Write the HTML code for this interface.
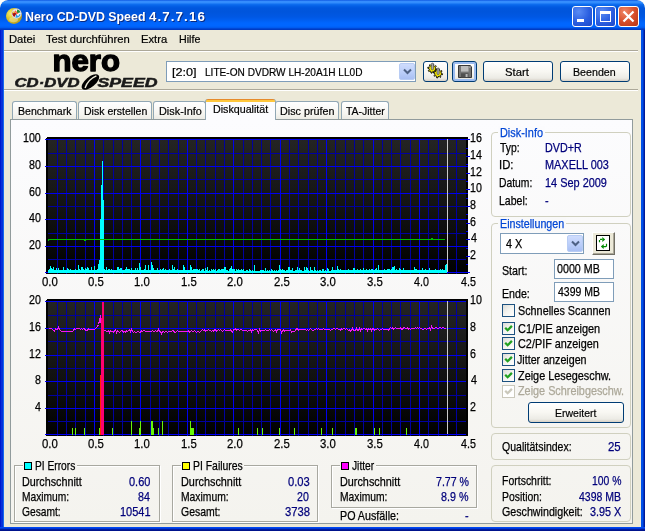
<!DOCTYPE html>
<html lang="de"><head><meta charset="utf-8"><title>Nero CD-DVD Speed 4.7.7.16</title>
<style>
html,body{margin:0;padding:0}
body{width:645px;height:531px;overflow:hidden;position:relative;background:#fff;font-family:"Liberation Sans",sans-serif;font-size:11px;color:#000;line-height:14px}
#win *{position:absolute;box-sizing:border-box;white-space:pre}
#win{position:absolute;left:0;top:0;width:645px;height:531px;background:#ece9d8;border-radius:8px 8px 0 0;overflow:hidden;will-change:transform}
#title{left:0;top:0;width:645px;height:30px;border-radius:8px 8px 0 0;
 background:linear-gradient(to bottom,#0a50dc 0px,#2f86fb 1px,#3c94ff 2px,#2a86fa 3px,#0d6cee 4.5px,#0460e6 6px,#0057de 8px,#0055dc 12px,#0058e4 17px,#005ef0 20px,#0066fe 23px,#0066ff 26px,#005cf0 27.5px,#0048d6 28.5px,#0034b8 30px)}
#ttext{left:25px;top:10px;line-height:13px;color:#fff;font-weight:bold;font-size:13.7px;text-shadow:1px 1px 0 #0a2a80}
.tb{top:6px;width:21px;height:21px;border:1px solid #fff;border-radius:3px;background:radial-gradient(circle at 30% 25%,#5a8cf4 0%,#2a5ee0 55%,#1c48c8 100%)}
.tbx{background:radial-gradient(circle at 30% 25%,#f08868 0%,#d8502c 50%,#b83414 100%)}
#bl{left:0;top:30px;width:4px;height:501px;background:linear-gradient(to right,#0019cf 0,#0019cf 1px,#0831d9 1px,#0831d9 3px,#166aee 3px)}
#br{left:641px;top:30px;width:4px;height:501px;background:linear-gradient(to right,#0050e8 0,#0050e8 2px,#0034c4 2px,#0034c4 3px,#001a98 3px)}
#bb{left:0;top:527px;width:645px;height:4px;background:linear-gradient(to bottom,#0048f1 0,#0048f1 1px,#0038d8 1px,#0038d8 2px,#001ca0 2px,#001ca0 3px,#00138c 3px)}
.t{font-size:11px;line-height:14px;transform-origin:0 0;-webkit-text-stroke:0.2px}
.m{font-size:12.4px;line-height:14px;transform-origin:0 0;-webkit-text-stroke:0.25px}
.c{transform-origin:50% 0}
.sep{left:4px;width:634px;height:2px;border-top:1px solid #aca899;border-bottom:1px solid #fff}
.btn{border:1px solid #003c74;border-radius:3px;background:linear-gradient(to bottom,#fff 0%,#f8f7f2 50%,#ecebe5 85%,#d6d0c5 100%)}
.tab{top:101px;height:18px;border:1px solid #91a7b4;border-bottom:none;border-radius:3px 3px 0 0;background:linear-gradient(to bottom,#fff,#f6f5f0 70%,#ecebe4)}
#panel{left:10px;top:119px;width:623px;height:405px;border:1px solid #919b9c;background:linear-gradient(to bottom,#fcfcfe,#f4f3ee)}
.gb{border:1px solid #d0d0bf;border-radius:4px}
.ge{border:1px solid #a8a8a0;box-shadow:1px 1px 0 #fff, inset 1px 1px 0 #fff}
.cover{height:12px}
.inp{border:1px solid #7f9db9;background:#fff}
.dd{width:16px;height:17px;border-radius:2px;border:1px solid #b8ccf4;background:linear-gradient(to bottom,#cfdcfd,#b9cdf9 60%,#a9bff3)}
.cb{width:13px;height:13px;border:1px solid #1c5180;background:linear-gradient(135deg,#dcdcd7,#f4f4f0 50%,#fff)}
.sq{width:8px;height:8px;border:1px solid #000}
</style></head>
<body>
<div id="win">
<div id="title"></div>
<svg style="left:5px;top:7px" width="18" height="18" viewBox="5 7 18 18">
<defs><radialGradient id="dg" cx="0.3" cy="0.35" r="0.8"><stop offset="0" stop-color="#f4ee70"/><stop offset="0.45" stop-color="#dcc428"/><stop offset="1" stop-color="#b09418"/></radialGradient></defs>
<ellipse cx="14" cy="16" rx="8" ry="7.9" fill="url(#dg)"/>
<ellipse cx="13.6" cy="19.6" rx="4.4" ry="2.6" fill="#f0e4a0" opacity="0.55"/>
<circle cx="16.5" cy="13.6" r="5.1" fill="#d4d4dc"/><circle cx="16.5" cy="13.6" r="4.1" fill="#f4f4f8"/>
<path d="M16.5 13.6 L13 11.4 A4.1 4.1 0 0 0 14.4 17.1Z" fill="#a81010"/>
<path d="M16.5 13.6 L17.2 9.6 A4.1 4.1 0 0 1 20.4 12.2Z" fill="#209038"/>
<path d="M16.5 13.6 L20.5 14.4 A4.1 4.1 0 0 1 15.4 17.5Z" fill="#28a0e8"/>
<path d="M14.8 10.8 L18.4 15" stroke="#ff6040" stroke-width="1.6" fill="none"/>
<circle cx="13.6" cy="12.4" r="0.8" fill="#ffe020"/><circle cx="18" cy="14.8" r="1" fill="#fff"/></svg>
<div id="ttext"><span style="position:static;display:inline-block;transform:scaleX(.905);transform-origin:0 0">Nero CD-DVD Speed&nbsp;</span><span style="left:123.5px;top:0;letter-spacing:1.15px;transform:scaleX(.97);transform-origin:0 0">4.7.7.16</span></div>
<div class="tb" style="left:572px"><div style="left:4px;top:12px;width:7px;height:3px;background:#fff"></div></div>
<div class="tb" style="left:595px"><div style="left:4px;top:4px;width:11px;height:11px;border:1px solid #fff;border-top-width:3px"></div></div>
<div class="tb tbx" style="left:618px"><svg style="left:0;top:0" width="19" height="19" viewBox="0 0 19 19"><path d="M4.5 4.5 L14.5 14.5 M14.5 4.5 L4.5 14.5" stroke="#fff" stroke-width="2.2" fill="none"/></svg></div>
<div id="bl"></div><div id="br"></div><div id="bb"></div>
<span class="t" style="left:8.5px;top:32px;transform:scaleX(1.021);">Datei</span>
<span class="t" style="left:46.2px;top:32px;transform:scaleX(1.022);">Test durchführen</span>
<span class="t" style="left:140.5px;top:32px;transform:scaleX(1.020);">Extra</span>
<span class="t" style="left:178.8px;top:32px;transform:scaleX(0.971);">Hilfe</span>
<div class="sep" style="top:50px"></div>
<div class="sep" style="top:89px"></div>
<svg id="logo" style="left:10px;top:50px" width="152" height="42" viewBox="10 50 152 42">
<text x="86.2" y="71" text-anchor="middle" font-family="Liberation Sans, sans-serif" font-weight="bold" font-size="29" textLength="67.5" lengthAdjust="spacingAndGlyphs" fill="#000" stroke="#000" stroke-width="1.3" stroke-linejoin="round">nero</text>
<g font-family="Liberation Sans, sans-serif" font-weight="bold" font-style="italic" font-size="12.6" fill="#1a1a1a" stroke="#1a1a1a" stroke-width="0.5">
<text x="14.5" y="86.6" textLength="65" lengthAdjust="spacingAndGlyphs">CD·DVD</text>
<text x="97.5" y="86.6" textLength="60" lengthAdjust="spacingAndGlyphs">SPEED</text>
</g>
<g transform="translate(90.4 82) rotate(-40)"><ellipse cx="0" cy="0" rx="10.6" ry="5" fill="#000"/><path d="M-8 1.2 Q0 -3.6 8.5 -0.8" stroke="#ece9d8" stroke-width="1.4" fill="none"/></g>
</svg>
<div class="inp" style="left:166px;top:61px;width:250px;height:21px"></div>
<span class="t" style="left:171.8px;top:65px;transform:scaleX(1.150);">[2:0]</span>
<span class="t" style="left:205.1px;top:65px;transform:scaleX(0.918);">LITE-ON DVDRW LH-20A1H LL0D</span>
<div class="dd" style="left:399px;top:63px"><svg style="left:0;top:0" width="15" height="15" viewBox="0 0 15 15"><path d="M4 5.5 L7.5 9 L11 5.5" stroke="#4d6185" stroke-width="2" fill="none"/></svg></div>
<div class="btn" style="left:423px;top:61px;width:25px;height:21px"></div>
<svg style="left:426px;top:62px" width="19" height="18" viewBox="0 0 19 18">
<path d="M9.6 6.6 L10.9 7.0 L10.7 8.0 L9.3 7.9 L8.6 8.9 L9.2 10.1 L8.5 10.7 L7.6 9.6 L6.3 9.9 L5.9 11.2 L4.9 11.0 L5.0 9.6 L4.0 8.9 L2.8 9.5 L2.2 8.8 L3.3 7.9 L3.0 6.6 L1.7 6.2 L1.9 5.2 L3.3 5.3 L4.0 4.3 L3.4 3.1 L4.1 2.5 L5.0 3.6 L6.3 3.3 L6.7 2.0 L7.7 2.2 L7.6 3.6 L8.6 4.3 L9.8 3.7 L10.4 4.4 L9.3 5.3Z" fill="#f4e800" stroke="#000" stroke-width="0.9" stroke-linejoin="round"/>
<path d="M15.3 11.4 L16.6 11.8 L16.4 12.8 L15.0 12.7 L14.3 13.7 L14.9 14.9 L14.2 15.5 L13.3 14.4 L12.0 14.7 L11.6 16.0 L10.6 15.8 L10.7 14.4 L9.7 13.7 L8.5 14.3 L7.9 13.6 L9.0 12.7 L8.7 11.4 L7.4 11.0 L7.6 10.0 L9.0 10.1 L9.7 9.1 L9.1 7.9 L9.8 7.3 L10.7 8.4 L12.0 8.1 L12.4 6.8 L13.4 7.0 L13.3 8.4 L14.3 9.1 L15.5 8.5 L16.1 9.2 L15.0 10.1Z" fill="#f4e800" stroke="#000" stroke-width="0.9" stroke-linejoin="round"/>
<rect x="5.3" y="1.2" width="2.2" height="6.6" rx="1" fill="#a8a8a8" stroke="#505050" stroke-width="0.7"/>
<rect x="11" y="6" width="2.2" height="6.6" rx="1" fill="#a8a8a8" stroke="#505050" stroke-width="0.7"/></svg>
<div class="btn" style="left:452px;top:61px;width:25px;height:21px;box-shadow:inset 0 0 0 2px #9cbcf0"></div>
<svg style="left:458px;top:65px" width="14" height="13" viewBox="0 0 14 13">
<path d="M0.5 0.5 H12.2 L13.5 1.8 V12.5 H0.5 Z" fill="#747474" stroke="#383838" stroke-width="1"/><rect x="3" y="1" width="7.5" height="5.6" fill="#bcbcbc"/><rect x="3" y="8.3" width="7.5" height="4.2" fill="#505050"/><rect x="7.6" y="9" width="2" height="3" fill="#b8b8b8"/><rect x="11.4" y="1.6" width="1" height="1" fill="#e0e0e0"/></svg>
<div class="btn" style="left:483px;top:61px;width:70px;height:21px"></div>
<span class="t" style="left:504.8px;top:65px;transform:scaleX(1.026);">Start</span>
<div class="btn" style="left:560px;top:61px;width:70px;height:21px"></div>
<span class="t" style="left:572.5px;top:65px;transform:scaleX(0.970);">Beenden</span>
<div id="panel"></div>
<div class="tab" style="left:12px;width:65px"></div>
<div class="tab" style="left:78px;width:74px"></div>
<div class="tab" style="left:153px;width:53px"></div>
<div class="tab" style="left:275px;width:64px"></div>
<div class="tab" style="left:341px;width:48px"></div>
<div class="tab" style="left:205px;top:99px;width:71px;height:21px;background:linear-gradient(to bottom,#e68b2c 0,#e68b2c 1px,#ffc73c 1px,#ffc73c 3px,#fcfcfe 3px);border-top:none"></div>
<span class="t" style="left:17.6px;top:104px;transform:scaleX(0.962);">Benchmark</span>
<span class="t" style="left:83.9px;top:104px;transform:scaleX(0.958);">Disk erstellen</span>
<span class="t" style="left:158.9px;top:104px;transform:scaleX(0.988);">Disk-Info</span>
<span class="t" style="left:213.0px;top:102px;transform:scaleX(0.971);">Diskqualität</span>
<span class="t" style="left:280.1px;top:104px;transform:scaleX(0.978);">Disc prüfen</span>
<span class="t" style="left:345.9px;top:104px;transform:scaleX(0.950);">TA-Jitter</span>
<svg id="charts" width="645" height="531" viewBox="0 0 645 531" style="left:0;top:0" shape-rendering="crispEdges">
<defs><linearGradient id="gbg" x1="0" y1="0" x2="0" y2="1"><stop offset="0" stop-color="#242424"/><stop offset="0.6" stop-color="#101010"/><stop offset="1" stop-color="#000"/></linearGradient></defs>
<path d="M47 137 H468 V274 H46 V138 Z" fill="#000"/>
<rect x="48" y="139" width="418" height="134" fill="url(#gbg)"/>
<rect x="57" y="139" width="1" height="135" fill="#0000a0"/>
<rect x="66" y="139" width="1" height="135" fill="#0000a0"/>
<rect x="75" y="139" width="1" height="135" fill="#0000a0"/>
<rect x="85" y="139" width="1" height="135" fill="#0000a0"/>
<rect x="103" y="139" width="1" height="135" fill="#0000a0"/>
<rect x="113" y="139" width="1" height="135" fill="#0000a0"/>
<rect x="122" y="139" width="1" height="135" fill="#0000a0"/>
<rect x="131" y="139" width="1" height="135" fill="#0000a0"/>
<rect x="150" y="139" width="1" height="135" fill="#0000a0"/>
<rect x="159" y="139" width="1" height="135" fill="#0000a0"/>
<rect x="168" y="139" width="1" height="135" fill="#0000a0"/>
<rect x="178" y="139" width="1" height="135" fill="#0000a0"/>
<rect x="196" y="139" width="1" height="135" fill="#0000a0"/>
<rect x="205" y="139" width="1" height="135" fill="#0000a0"/>
<rect x="215" y="139" width="1" height="135" fill="#0000a0"/>
<rect x="224" y="139" width="1" height="135" fill="#0000a0"/>
<rect x="243" y="139" width="1" height="135" fill="#0000a0"/>
<rect x="252" y="139" width="1" height="135" fill="#0000a0"/>
<rect x="261" y="139" width="1" height="135" fill="#0000a0"/>
<rect x="270" y="139" width="1" height="135" fill="#0000a0"/>
<rect x="289" y="139" width="1" height="135" fill="#0000a0"/>
<rect x="298" y="139" width="1" height="135" fill="#0000a0"/>
<rect x="308" y="139" width="1" height="135" fill="#0000a0"/>
<rect x="317" y="139" width="1" height="135" fill="#0000a0"/>
<rect x="335" y="139" width="1" height="135" fill="#0000a0"/>
<rect x="345" y="139" width="1" height="135" fill="#0000a0"/>
<rect x="354" y="139" width="1" height="135" fill="#0000a0"/>
<rect x="363" y="139" width="1" height="135" fill="#0000a0"/>
<rect x="382" y="139" width="1" height="135" fill="#0000a0"/>
<rect x="391" y="139" width="1" height="135" fill="#0000a0"/>
<rect x="400" y="139" width="1" height="135" fill="#0000a0"/>
<rect x="410" y="139" width="1" height="135" fill="#0000a0"/>
<rect x="428" y="139" width="1" height="135" fill="#0000a0"/>
<rect x="438" y="139" width="1" height="135" fill="#0000a0"/>
<rect x="447" y="139" width="1" height="135" fill="#0000a0"/>
<rect x="456" y="139" width="1" height="135" fill="#0000a0"/>
<rect x="48" y="153" width="418" height="1" fill="#0000a0"/>
<rect x="48" y="179" width="418" height="1" fill="#0000a0"/>
<rect x="48" y="206" width="418" height="1" fill="#0000a0"/>
<rect x="48" y="233" width="418" height="1" fill="#0000a0"/>
<rect x="48" y="259" width="418" height="1" fill="#0000a0"/>
<rect x="94" y="139" width="1" height="135" fill="#0000f0"/>
<rect x="140" y="139" width="1" height="135" fill="#0000f0"/>
<rect x="187" y="139" width="1" height="135" fill="#0000f0"/>
<rect x="233" y="139" width="1" height="135" fill="#0000f0"/>
<rect x="280" y="139" width="1" height="135" fill="#0000f0"/>
<rect x="326" y="139" width="1" height="135" fill="#0000f0"/>
<rect x="373" y="139" width="1" height="135" fill="#0000f0"/>
<rect x="419" y="139" width="1" height="135" fill="#0000f0"/>
<rect x="45" y="139" width="423" height="1" fill="#0000f0"/>
<rect x="45" y="166" width="423" height="1" fill="#0000f0"/>
<rect x="45" y="193" width="423" height="1" fill="#0000f0"/>
<rect x="45" y="219" width="423" height="1" fill="#0000f0"/>
<rect x="45" y="246" width="423" height="1" fill="#0000f0"/>
<rect x="45" y="272" width="423" height="1" fill="#0000f0"/>
<rect x="466" y="139" width="4" height="1" fill="#0000f0"/>
<rect x="466" y="148" width="2" height="1" fill="#0000f0"/>
<rect x="466" y="156" width="4" height="1" fill="#0000f0"/>
<rect x="466" y="164" width="2" height="1" fill="#0000f0"/>
<rect x="466" y="173" width="4" height="1" fill="#0000f0"/>
<rect x="466" y="181" width="2" height="1" fill="#0000f0"/>
<rect x="466" y="189" width="4" height="1" fill="#0000f0"/>
<rect x="466" y="198" width="2" height="1" fill="#0000f0"/>
<rect x="466" y="206" width="4" height="1" fill="#0000f0"/>
<rect x="466" y="214" width="2" height="1" fill="#0000f0"/>
<rect x="466" y="223" width="4" height="1" fill="#0000f0"/>
<rect x="466" y="231" width="2" height="1" fill="#0000f0"/>
<rect x="466" y="239" width="4" height="1" fill="#0000f0"/>
<rect x="466" y="248" width="2" height="1" fill="#0000f0"/>
<rect x="466" y="256" width="4" height="1" fill="#0000f0"/>
<rect x="466" y="264" width="2" height="1" fill="#0000f0"/>
<rect x="466" y="272" width="4" height="1" fill="#0000f0"/>
<path d="M48 273V270h1V269h1V266h1V268h1V269h1V267h1V270h1V270h1V268h1V270h1V268h1V270h1V270h1V270h1V270h1V267h1V270h1V270h1V270h1V268h1V269h1V270h1V269h1V270h1V270h1V270h1V270h1V269h1V270h1V270h1V265h1V269h1V270h1V267h1V267h1V269h1V270h1V268h1V269h1V267h1V268h1V270h1V270h1V267h1V270h1V270h1V266h1V270h1V270h1V269h1V264h1V260h1V269h1V270h1V270h1V270h1V269h1V270h1V267h1V270h1V269h1V269h1V270h1V269h1V270h1V270h1V270h1V270h1V270h1V267h1V267h1V269h1V268h1V268h1V270h1V270h1V270h1V269h1V267h1V269h1V269h1V269h1V270h1V268h1V270h1V270h1V270h1V268h1V270h1V268h1V270h1V263h1V267h1V270h1V270h1V270h1V269h1V265h1V270h1V270h1V265h1V270h1V270h1V262h1V265h1V268h1V270h1V270h1V270h1V268h1V270h1V270h1V269h1V270h1V269h1V268h1V270h1V269h1V270h1V270h1V270h1V269h1V270h1V270h1V265h1V269h1V267h1V270h1V270h1V269h1V270h1V270h1V270h1V270h1V270h1V265h1V267h1V270h1V270h1V270h1V270h1V270h1V265h1V267h1V270h1V269h1V269h1V269h1V269h1V269h1V270h1V269h1V271h1V270h1V269h1V269h1V271h1V268h1V270h1V267h1V271h1V270h1V271h1V269h1V270h1V269h1V270h1V269h1V271h1V270h1V269h1V269h1V270h1V269h1V269h1V269h1V267h1V267h1V270h1V270h1V271h1V269h1V268h1V266h1V269h1V269h1V269h1V271h1V269h1V270h1V269h1V270h1V270h1V269h1V270h1V269h1V271h1V271h1V270h1V270h1V271h1V269h1V270h1V271h1V270h1V271h1V265h1V271h1V271h1V271h1V271h1V271h1V270h1V270h1V270h1V270h1V271h1V268h1V271h1V270h1V271h1V270h1V271h1V269h1V270h1V271h1V270h1V271h1V270h1V271h1V270h1V265h1V269h1V270h1V269h1V270h1V270h1V271h1V270h1V270h1V267h1V267h1V270h1V270h1V268h1V271h1V271h1V270h1V270h1V267h1V270h1V268h1V270h1V270h1V271h1V271h1V267h1V270h1V267h1V268h1V270h1V271h1V267h1V270h1V270h1V271h1V267h1V270h1V271h1V270h1V271h1V270h1V270h1V271h1V269h1V269h1V271h1V270h1V271h1V268h1V269h1V271h1V271h1V270h1V267h1V270h1V270h1V270h1V270h1V266h1V269h1V270h1V269h1V270h1V270h1V270h1V270h1V270h1V270h1V270h1V269h1V270h1V270h1V270h1V270h1V268h1V268h1V270h1V270h1V269h1V270h1V270h1V269h1V270h1V270h1V268h1V270h1V270h1V269h1V270h1V270h1V269h1V270h1V269h1V269h1V270h1V270h1V269h1V268h1V270h1V265h1V270h1V270h1V270h1V270h1V270h1V269h1V270h1V270h1V269h1V269h1V269h1V270h1V269h1V267h1V267h1V266h1V270h1V269h1V270h1V270h1V268h1V269h1V270h1V270h1V268h1V270h1V270h1V270h1V270h1V270h1V270h1V270h1V270h1V270h1V270h1V267h1V269h1V269h1V270h1V270h1V270h1V270h1V270h1V268h1V270h1V270h1V269h1V270h1V270h1V270h1V268h1V270h1V270h1V270h1V270h1V270h1V269h1V270h1V270h1V270h1V270h1V269h1V270h1V269h1V270h1V270h1V265h1V264h1V273Z" fill="#00ffff"/>
<rect x="100" y="219" width="1" height="54" fill="#00ffff"/>
<rect x="101" y="185" width="1" height="88" fill="#00ffff"/>
<rect x="102" y="161" width="1" height="112" fill="#00ffff"/>
<rect x="103" y="200" width="1" height="73" fill="#00ffff"/>
<path d="M48.5 241 V239.5 H84 v1 h1 v-1 H431 v-1 h1 v1 H445" fill="none" stroke="#00c000" stroke-width="1"/>
<rect x="447" y="139" width="1" height="133" fill="#cacaca"/>
<path d="M47 299 H468 V436 H46 V300 Z" fill="#000"/>
<rect x="48" y="301" width="418" height="134" fill="url(#gbg)"/>
<rect x="57" y="301" width="1" height="135" fill="#0000a0"/>
<rect x="66" y="301" width="1" height="135" fill="#0000a0"/>
<rect x="75" y="301" width="1" height="135" fill="#0000a0"/>
<rect x="85" y="301" width="1" height="135" fill="#0000a0"/>
<rect x="103" y="301" width="1" height="135" fill="#0000a0"/>
<rect x="113" y="301" width="1" height="135" fill="#0000a0"/>
<rect x="122" y="301" width="1" height="135" fill="#0000a0"/>
<rect x="131" y="301" width="1" height="135" fill="#0000a0"/>
<rect x="150" y="301" width="1" height="135" fill="#0000a0"/>
<rect x="159" y="301" width="1" height="135" fill="#0000a0"/>
<rect x="168" y="301" width="1" height="135" fill="#0000a0"/>
<rect x="178" y="301" width="1" height="135" fill="#0000a0"/>
<rect x="196" y="301" width="1" height="135" fill="#0000a0"/>
<rect x="205" y="301" width="1" height="135" fill="#0000a0"/>
<rect x="215" y="301" width="1" height="135" fill="#0000a0"/>
<rect x="224" y="301" width="1" height="135" fill="#0000a0"/>
<rect x="243" y="301" width="1" height="135" fill="#0000a0"/>
<rect x="252" y="301" width="1" height="135" fill="#0000a0"/>
<rect x="261" y="301" width="1" height="135" fill="#0000a0"/>
<rect x="270" y="301" width="1" height="135" fill="#0000a0"/>
<rect x="289" y="301" width="1" height="135" fill="#0000a0"/>
<rect x="298" y="301" width="1" height="135" fill="#0000a0"/>
<rect x="308" y="301" width="1" height="135" fill="#0000a0"/>
<rect x="317" y="301" width="1" height="135" fill="#0000a0"/>
<rect x="335" y="301" width="1" height="135" fill="#0000a0"/>
<rect x="345" y="301" width="1" height="135" fill="#0000a0"/>
<rect x="354" y="301" width="1" height="135" fill="#0000a0"/>
<rect x="363" y="301" width="1" height="135" fill="#0000a0"/>
<rect x="382" y="301" width="1" height="135" fill="#0000a0"/>
<rect x="391" y="301" width="1" height="135" fill="#0000a0"/>
<rect x="400" y="301" width="1" height="135" fill="#0000a0"/>
<rect x="410" y="301" width="1" height="135" fill="#0000a0"/>
<rect x="428" y="301" width="1" height="135" fill="#0000a0"/>
<rect x="438" y="301" width="1" height="135" fill="#0000a0"/>
<rect x="447" y="301" width="1" height="135" fill="#0000a0"/>
<rect x="456" y="301" width="1" height="135" fill="#0000a0"/>
<rect x="48" y="315" width="418" height="1" fill="#0000a0"/>
<rect x="48" y="341" width="418" height="1" fill="#0000a0"/>
<rect x="48" y="368" width="418" height="1" fill="#0000a0"/>
<rect x="48" y="395" width="418" height="1" fill="#0000a0"/>
<rect x="48" y="421" width="418" height="1" fill="#0000a0"/>
<rect x="94" y="301" width="1" height="135" fill="#0000f0"/>
<rect x="140" y="301" width="1" height="135" fill="#0000f0"/>
<rect x="187" y="301" width="1" height="135" fill="#0000f0"/>
<rect x="233" y="301" width="1" height="135" fill="#0000f0"/>
<rect x="280" y="301" width="1" height="135" fill="#0000f0"/>
<rect x="326" y="301" width="1" height="135" fill="#0000f0"/>
<rect x="373" y="301" width="1" height="135" fill="#0000f0"/>
<rect x="419" y="301" width="1" height="135" fill="#0000f0"/>
<rect x="45" y="301" width="421" height="1" fill="#0000f0"/>
<rect x="45" y="328" width="421" height="1" fill="#0000f0"/>
<rect x="45" y="355" width="421" height="1" fill="#0000f0"/>
<rect x="45" y="381" width="421" height="1" fill="#0000f0"/>
<rect x="45" y="408" width="421" height="1" fill="#0000f0"/>
<rect x="45" y="434" width="421" height="1" fill="#0000f0"/>
<rect x="72" y="428" width="1" height="7" fill="#68f808"/>
<rect x="75" y="428" width="1" height="7" fill="#68f808"/>
<rect x="84" y="428" width="1" height="7" fill="#68f808"/>
<rect x="99" y="428" width="1" height="7" fill="#68f808"/>
<rect x="112" y="428" width="1" height="7" fill="#68f808"/>
<rect x="139" y="428" width="1" height="7" fill="#68f808"/>
<rect x="153" y="428" width="1" height="7" fill="#68f808"/>
<rect x="158" y="428" width="1" height="7" fill="#68f808"/>
<rect x="191" y="428" width="1" height="7" fill="#68f808"/>
<rect x="192" y="428" width="1" height="7" fill="#68f808"/>
<rect x="193" y="428" width="1" height="7" fill="#68f808"/>
<rect x="238" y="428" width="1" height="7" fill="#68f808"/>
<rect x="257" y="428" width="1" height="7" fill="#68f808"/>
<rect x="262" y="428" width="1" height="7" fill="#68f808"/>
<rect x="279" y="428" width="1" height="7" fill="#68f808"/>
<rect x="294" y="428" width="1" height="7" fill="#68f808"/>
<rect x="321" y="428" width="1" height="7" fill="#68f808"/>
<rect x="332" y="428" width="1" height="7" fill="#68f808"/>
<rect x="355" y="428" width="1" height="7" fill="#68f808"/>
<rect x="356" y="428" width="1" height="7" fill="#68f808"/>
<rect x="374" y="428" width="1" height="7" fill="#68f808"/>
<rect x="379" y="428" width="1" height="7" fill="#68f808"/>
<rect x="406" y="428" width="1" height="7" fill="#68f808"/>
<rect x="131" y="421" width="1" height="14" fill="#68f808"/>
<rect x="140" y="421" width="1" height="14" fill="#68f808"/>
<rect x="151" y="421" width="1" height="14" fill="#68f808"/>
<rect x="152" y="421" width="1" height="14" fill="#68f808"/>
<rect x="162" y="421" width="1" height="14" fill="#68f808"/>
<rect x="190" y="421" width="1" height="14" fill="#68f808"/>
<polyline points="48.5,328.5 49.5,328.5 50.5,328.5 51.5,328.5 52.5,329.5 53.5,330.5 54.5,331.5 55.5,328.5 56.5,329.5 57.5,329.5 58.5,327.5 59.5,329.5 60.5,330.5 61.5,331.5 62.5,331.5 63.5,331.5 64.5,331.5 65.5,331.5 66.5,331.5 67.5,331.5 68.5,331.5 69.5,331.5 70.5,331.5 71.5,331.5 72.5,331.5 73.5,330.5 74.5,328.5 75.5,329.5 76.5,328.5 77.5,328.5 78.5,328.5 79.5,328.5 80.5,329.5 81.5,328.5 82.5,329.5 83.5,328.5 84.5,328.5 85.5,330.5 86.5,330.5 87.5,330.5 88.5,328.5 89.5,329.5 90.5,329.5 91.5,329.5 92.5,329.5 93.5,329.5 94.5,329.5 95.5,328.5 96.5,327.5 97.5,326.5 98.5,324.5 99.5,320.5 100.5,315.5 101.5,330.5 102.5,330.5 103.5,330.5 104.5,330.5 105.5,330.5 106.5,331.5 107.5,331.5 108.5,330.5 109.5,332.5 110.5,330.5 111.5,331.5 112.5,331.5 113.5,332.5 114.5,330.5 115.5,329.5 116.5,332.5 117.5,330.5 118.5,331.5 119.5,332.5 120.5,331.5 121.5,330.5 122.5,330.5 123.5,332.5 124.5,331.5 125.5,332.5 126.5,330.5 127.5,331.5 128.5,330.5 129.5,329.5 130.5,331.5 131.5,329.5 132.5,331.5 133.5,332.5 134.5,331.5 135.5,332.5 136.5,332.5 137.5,331.5 138.5,331.5 139.5,332.5 140.5,332.5 141.5,330.5 142.5,331.5 143.5,330.5 144.5,330.5 145.5,331.5 146.5,331.5 147.5,331.5 148.5,331.5 149.5,331.5 150.5,331.5 151.5,331.5 152.5,330.5 153.5,331.5 154.5,331.5 155.5,330.5 156.5,331.5 157.5,331.5 158.5,329.5 159.5,331.5 160.5,331.5 161.5,333.5 162.5,331.5 163.5,331.5 164.5,332.5 165.5,331.5 166.5,331.5 167.5,332.5 168.5,331.5 169.5,331.5 170.5,331.5 171.5,331.5 172.5,330.5 173.5,330.5 174.5,332.5 175.5,332.5 176.5,331.5 177.5,330.5 178.5,331.5 179.5,331.5 180.5,331.5 181.5,331.5 182.5,331.5 183.5,331.5 184.5,331.5 185.5,331.5 186.5,331.5 187.5,331.5 188.5,330.5 189.5,332.5 190.5,331.5 191.5,330.5 192.5,331.5 193.5,331.5 194.5,330.5 195.5,331.5 196.5,332.5 197.5,331.5 198.5,331.5 199.5,332.5 200.5,331.5 201.5,330.5 202.5,329.5 203.5,330.5 204.5,329.5 205.5,331.5 206.5,330.5 207.5,330.5 208.5,329.5 209.5,330.5 210.5,330.5 211.5,331.5 212.5,330.5 213.5,331.5 214.5,329.5 215.5,329.5 216.5,331.5 217.5,330.5 218.5,329.5 219.5,330.5 220.5,329.5 221.5,330.5 222.5,331.5 223.5,330.5 224.5,329.5 225.5,330.5 226.5,330.5 227.5,330.5 228.5,330.5 229.5,330.5 230.5,329.5 231.5,331.5 232.5,332.5 233.5,329.5 234.5,329.5 235.5,328.5 236.5,330.5 237.5,329.5 238.5,329.5 239.5,330.5 240.5,329.5 241.5,329.5 242.5,330.5 243.5,330.5 244.5,330.5 245.5,330.5 246.5,330.5 247.5,331.5 248.5,330.5 249.5,330.5 250.5,329.5 251.5,331.5 252.5,329.5 253.5,330.5 254.5,329.5 255.5,329.5 256.5,329.5 257.5,330.5 258.5,332.5 259.5,329.5 260.5,331.5 261.5,330.5 262.5,330.5 263.5,330.5 264.5,330.5 265.5,329.5 266.5,330.5 267.5,330.5 268.5,330.5 269.5,329.5 270.5,330.5 271.5,329.5 272.5,330.5 273.5,331.5 274.5,330.5 275.5,329.5 276.5,331.5 277.5,329.5 278.5,329.5 279.5,329.5 280.5,329.5 281.5,332.5 282.5,330.5 283.5,329.5 284.5,331.5 285.5,330.5 286.5,330.5 287.5,330.5 288.5,330.5 289.5,330.5 290.5,329.5 291.5,332.5 292.5,331.5 293.5,331.5 294.5,331.5 295.5,330.5 296.5,328.5 297.5,328.5 298.5,330.5 299.5,329.5 300.5,329.5 301.5,329.5 302.5,329.5 303.5,329.5 304.5,329.5 305.5,329.5 306.5,330.5 307.5,329.5 308.5,330.5 309.5,329.5 310.5,328.5 311.5,329.5 312.5,330.5 313.5,330.5 314.5,329.5 315.5,329.5 316.5,328.5 317.5,329.5 318.5,328.5 319.5,329.5 320.5,329.5 321.5,329.5 322.5,329.5 323.5,328.5 324.5,329.5 325.5,329.5 326.5,329.5 327.5,329.5 328.5,329.5 329.5,329.5 330.5,330.5 331.5,329.5 332.5,329.5 333.5,328.5 334.5,328.5 335.5,329.5 336.5,328.5 337.5,328.5 338.5,329.5 339.5,329.5 340.5,330.5 341.5,328.5 342.5,329.5 343.5,328.5 344.5,328.5 345.5,329.5 346.5,328.5 347.5,329.5 348.5,330.5 349.5,329.5 350.5,331.5 351.5,330.5 352.5,328.5 353.5,330.5 354.5,330.5 355.5,330.5 356.5,328.5 357.5,330.5 358.5,330.5 359.5,328.5 360.5,330.5 361.5,328.5 362.5,329.5 363.5,328.5 364.5,328.5 365.5,329.5 366.5,328.5 367.5,330.5 368.5,328.5 369.5,329.5 370.5,328.5 371.5,330.5 372.5,328.5 373.5,328.5 374.5,330.5 375.5,329.5 376.5,329.5 377.5,328.5 378.5,329.5 379.5,330.5 380.5,329.5 381.5,329.5 382.5,328.5 383.5,329.5 384.5,329.5 385.5,329.5 386.5,329.5 387.5,329.5 388.5,330.5 389.5,328.5 390.5,327.5 391.5,328.5 392.5,327.5 393.5,329.5 394.5,328.5 395.5,327.5 396.5,328.5 397.5,328.5 398.5,328.5 399.5,328.5 400.5,327.5 401.5,329.5 402.5,329.5 403.5,327.5 404.5,327.5 405.5,328.5 406.5,328.5 407.5,327.5 408.5,329.5 409.5,328.5 410.5,329.5 411.5,328.5 412.5,328.5 413.5,328.5 414.5,328.5 415.5,327.5 416.5,328.5 417.5,327.5 418.5,328.5 419.5,327.5 420.5,328.5 421.5,328.5 422.5,329.5 423.5,329.5 424.5,328.5 425.5,328.5 426.5,329.5 427.5,328.5 428.5,328.5 429.5,327.5 430.5,329.5 431.5,326.5 432.5,328.5 433.5,328.5 434.5,328.5 435.5,327.5 436.5,327.5 437.5,328.5 438.5,328.5 439.5,327.5 440.5,327.5 441.5,328.5 442.5,327.5 443.5,327.5 444.5,328.5 445.5,328.5" fill="none" stroke="#f418f4" stroke-width="1" stroke-linejoin="miter"/>
<rect x="100" y="375" width="1" height="60" fill="#ff2a00"/>
<rect x="101" y="318" width="1" height="117" fill="#ff0070"/>
<rect x="102" y="302" width="2" height="133" fill="#ff0070"/>
<rect x="447" y="301" width="1" height="133" fill="#cacaca"/>
</svg>
<span class="m" style="left:23.4px;top:131px;transform:scaleX(0.860);">100</span>
<span class="m" style="left:28.6px;top:158px;transform:scaleX(0.860);">80</span>
<span class="m" style="left:28.6px;top:185px;transform:scaleX(0.860);">60</span>
<span class="m" style="left:28.6px;top:211px;transform:scaleX(0.860);">40</span>
<span class="m" style="left:28.6px;top:238px;transform:scaleX(0.860);">20</span>
<span class="m" style="left:470.1px;top:131px;transform:scaleX(0.860);">16</span>
<span class="m" style="left:470.1px;top:148px;transform:scaleX(0.860);">14</span>
<span class="m" style="left:470.1px;top:165px;transform:scaleX(0.860);">12</span>
<span class="m" style="left:470.1px;top:181px;transform:scaleX(0.860);">10</span>
<span class="m" style="left:470.1px;top:198px;transform:scaleX(0.860);">8</span>
<span class="m" style="left:470.1px;top:215px;transform:scaleX(0.860);">6</span>
<span class="m" style="left:471.0px;top:231px;transform:scaleX(0.860);">4</span>
<span class="m" style="left:470.1px;top:248px;transform:scaleX(0.860);">2</span>
<span class="m" style="left:41.8px;top:275px;transform:scaleX(0.919);">0.0</span>
<span class="m" style="left:87.8px;top:275px;transform:scaleX(0.919);">0.5</span>
<span class="m" style="left:133.8px;top:275px;transform:scaleX(0.919);">1.0</span>
<span class="m" style="left:180.8px;top:275px;transform:scaleX(0.919);">1.5</span>
<span class="m" style="left:226.8px;top:275px;transform:scaleX(0.919);">2.0</span>
<span class="m" style="left:273.8px;top:275px;transform:scaleX(0.919);">2.5</span>
<span class="m" style="left:319.8px;top:275px;transform:scaleX(0.919);">3.0</span>
<span class="m" style="left:366.8px;top:275px;transform:scaleX(0.919);">3.5</span>
<span class="m" style="left:413.7px;top:275px;transform:scaleX(0.865);">4.0</span>
<span class="m" style="left:460.7px;top:275px;transform:scaleX(0.865);">4.5</span>
<span class="m" style="left:28.6px;top:293px;transform:scaleX(0.860);">20</span>
<span class="m" style="left:28.6px;top:320px;transform:scaleX(0.860);">16</span>
<span class="m" style="left:28.6px;top:347px;transform:scaleX(0.860);">12</span>
<span class="m" style="left:34.6px;top:373px;transform:scaleX(0.860);">8</span>
<span class="m" style="left:34.6px;top:400px;transform:scaleX(0.860);">4</span>
<span class="m" style="left:470.1px;top:293px;transform:scaleX(0.860);">10</span>
<span class="m" style="left:470.1px;top:320px;transform:scaleX(0.860);">8</span>
<span class="m" style="left:470.1px;top:347px;transform:scaleX(0.860);">6</span>
<span class="m" style="left:471.0px;top:373px;transform:scaleX(0.860);">4</span>
<span class="m" style="left:470.1px;top:400px;transform:scaleX(0.860);">2</span>
<span class="m" style="left:41.8px;top:437px;transform:scaleX(0.919);">0.0</span>
<span class="m" style="left:87.8px;top:437px;transform:scaleX(0.919);">0.5</span>
<span class="m" style="left:133.8px;top:437px;transform:scaleX(0.919);">1.0</span>
<span class="m" style="left:180.8px;top:437px;transform:scaleX(0.919);">1.5</span>
<span class="m" style="left:226.8px;top:437px;transform:scaleX(0.919);">2.0</span>
<span class="m" style="left:273.8px;top:437px;transform:scaleX(0.919);">2.5</span>
<span class="m" style="left:319.8px;top:437px;transform:scaleX(0.919);">3.0</span>
<span class="m" style="left:366.8px;top:437px;transform:scaleX(0.919);">3.5</span>
<span class="m" style="left:413.7px;top:437px;transform:scaleX(0.865);">4.0</span>
<span class="m" style="left:460.7px;top:437px;transform:scaleX(0.865);">4.5</span>
<div class="gb" style="left:491px;top:132px;width:140px;height:85px"></div>
<div class="cover" style="left:498px;top:126px;width:47px;background:#fbfbfd"></div>
<span class="m" style="left:499.5px;top:126px;transform:scaleX(0.879);color:#0046d5;">Disk-Info</span>
<span class="m" style="left:500.0px;top:141px;transform:scaleX(0.835);">Typ:</span>
<span class="m" style="left:544.9px;top:141px;transform:scaleX(0.866);color:#00007b;">DVD+R</span>
<span class="m" style="left:499.1px;top:158px;transform:scaleX(0.914);">ID:</span>
<span class="m" style="left:544.9px;top:158px;transform:scaleX(0.880);color:#00007b;">MAXELL 003</span>
<span class="m" style="left:499.2px;top:176px;transform:scaleX(0.834);">Datum:</span>
<span class="m" style="left:544.9px;top:176px;transform:scaleX(0.881);color:#00007b;">14 Sep 2009</span>
<span class="m" style="left:499.1px;top:194px;transform:scaleX(0.850);">Label:</span>
<span class="m" style="left:544.9px;top:194px;transform:scaleX(0.875);color:#00007b;">-</span>
<div class="gb" style="left:491px;top:223px;width:140px;height:205px"></div>
<div class="cover" style="left:498px;top:217px;width:68px;background:#f9f9f9"></div>
<span class="m" style="left:499.5px;top:217px;transform:scaleX(0.863);color:#0046d5;">Einstellungen</span>
<div class="inp" style="left:500px;top:233px;width:84px;height:21px"></div>
<span class="m" style="left:506.0px;top:237px;transform:scaleX(0.875);">4 X</span>
<div class="dd" style="left:567px;top:235px"><svg style="left:0;top:0" width="15" height="15" viewBox="0 0 15 15"><path d="M4 5.5 L7.5 9 L11 5.5" stroke="#4d6185" stroke-width="2" fill="none"/></svg></div>
<div style="left:592px;top:232px;width:23px;height:23px;background:#ece9d8;border:1px solid;border-color:#fff #716f64 #716f64 #fff;box-shadow:inset -1px -1px 0 #aca899"></div>
<svg style="left:596px;top:235px" width="14" height="16" viewBox="0 0 14 16"><rect x="0.5" y="0.5" width="13" height="15" fill="#fff" stroke="#000"/>
<path d="M3.5 7.3 V5.2 Q3.5 4.4 4.3 4.4 H7" stroke="#008a00" stroke-width="1.2" fill="none" stroke-dasharray="2.2 0.8"/><path d="M6.3 1.9 L9.2 4.4 L6.3 6.9 Z" fill="#008a00"/>
<path d="M10.5 8.7 V10.8 Q10.5 11.6 9.7 11.6 H7" stroke="#008a00" stroke-width="1.2" fill="none"/><path d="M7.7 9.1 L4.8 11.6 L7.7 14.1 Z" fill="#008a00"/></svg>
<span class="m" style="left:501.7px;top:264px;transform:scaleX(0.861);">Start:</span>
<div class="inp" style="left:554px;top:259px;width:60px;height:20px"></div>
<span class="m" style="left:556.8px;top:262px;transform:scaleX(0.862);">0000 MB</span>
<span class="m" style="left:501.7px;top:287px;transform:scaleX(0.858);">Ende:</span>
<div class="inp" style="left:554px;top:282px;width:60px;height:20px"></div>
<span class="m" style="left:557.7px;top:285px;transform:scaleX(0.845);">4399 MB</span>
<div class="cb" style="left:502px;top:304px"></div>
<span class="m" style="left:517.8px;top:304px;transform:scaleX(0.872);">Schnelles Scannen</span>
<div class="cb" style="left:502px;top:322px"><svg style="left:1px;top:1px" width="9" height="9" viewBox="0 0 9 9"><path d="M1.2 3.8 L3.6 6.2 L7.9 1.9" stroke="#21a121" stroke-width="2.3" fill="none"/></svg></div>
<span class="m" style="left:517.8px;top:322px;transform:scaleX(0.884);">C1/PIE anzeigen</span>
<div class="cb" style="left:502px;top:337px"><svg style="left:1px;top:1px" width="9" height="9" viewBox="0 0 9 9"><path d="M1.2 3.8 L3.6 6.2 L7.9 1.9" stroke="#21a121" stroke-width="2.3" fill="none"/></svg></div>
<span class="m" style="left:517.8px;top:337px;transform:scaleX(0.876);">C2/PIF anzeigen</span>
<div class="cb" style="left:502px;top:353px"><svg style="left:1px;top:1px" width="9" height="9" viewBox="0 0 9 9"><path d="M1.2 3.8 L3.6 6.2 L7.9 1.9" stroke="#21a121" stroke-width="2.3" fill="none"/></svg></div>
<span class="m" style="left:517.1px;top:353px;transform:scaleX(0.863);">Jitter anzeigen</span>
<div class="cb" style="left:502px;top:369px"><svg style="left:1px;top:1px" width="9" height="9" viewBox="0 0 9 9"><path d="M1.2 3.8 L3.6 6.2 L7.9 1.9" stroke="#21a121" stroke-width="2.3" fill="none"/></svg></div>
<span class="m" style="left:518.2px;top:369px;transform:scaleX(0.877);">Zeige Lesegeschw.</span>
<div class="cb" style="left:502px;top:385px;border-color:#cac8bb;background:#fff"><svg style="left:1px;top:1px" width="9" height="9" viewBox="0 0 9 9"><path d="M1.2 3.8 L3.6 6.2 L7.9 1.9" stroke="#cac8bb" stroke-width="2.3" fill="none"/></svg></div>
<span class="m" style="left:518.2px;top:384px;transform:scaleX(0.875);color:#aca899;">Zeige Schreibgeschw.</span>
<div class="btn" style="left:528px;top:402px;width:96px;height:21px"></div>
<span class="t" style="left:554.7px;top:406px;transform:scaleX(0.953);">Erweitert</span>
<div class="gb" style="left:491px;top:433px;width:140px;height:27px"></div>
<span class="m" style="left:501.8px;top:440px;transform:scaleX(0.850);">Qualitätsindex:</span>
<span class="m" style="left:607.6px;top:440px;transform:scaleX(0.923);color:#00007b;">25</span>
<div class="gb" style="left:491px;top:465px;width:140px;height:57px"></div>
<span class="m" style="left:501.8px;top:474px;transform:scaleX(0.846);">Fortschritt:</span>
<span class="m" style="left:592.2px;top:474px;transform:scaleX(0.838);color:#00007b;">100 %</span>
<span class="m" style="left:501.8px;top:490px;transform:scaleX(0.841);">Position:</span>
<span class="m" style="left:579.0px;top:490px;transform:scaleX(0.847);color:#00007b;">4398 MB</span>
<span class="m" style="left:501.7px;top:505px;transform:scaleX(0.862);">Geschwindigkeit:</span>
<span class="m" style="left:590.0px;top:505px;transform:scaleX(0.874);color:#00007b;">3.95 X</span>
<div class="ge" style="left:14px;top:465px;width:146px;height:57px"></div>
<div class="cover" style="left:23px;top:460px;width:54px;background:#f5f4f0"></div>
<div class="sq" style="left:24px;top:462px;background:#00ffff"></div>
<span class="m" style="left:34.8px;top:459px;transform:scaleX(0.825);">PI Errors</span>
<span class="m" style="left:22.0px;top:475px;transform:scaleX(0.869);">Durchschnitt</span>
<span class="m" style="left:128.9px;top:475px;transform:scaleX(0.887);color:#00007b;">0.60</span>
<span class="m" style="left:22.1px;top:490px;transform:scaleX(0.825);">Maximum:</span>
<span class="m" style="left:138.1px;top:490px;transform:scaleX(0.862);color:#00007b;">84</span>
<span class="m" style="left:22.1px;top:505px;transform:scaleX(0.827);">Gesamt:</span>
<span class="m" style="left:120.0px;top:505px;transform:scaleX(0.888);color:#00007b;">10541</span>
<div class="ge" style="left:172px;top:465px;width:146px;height:57px"></div>
<div class="cover" style="left:181px;top:460px;width:63px;background:#f5f4f0"></div>
<div class="sq" style="left:182px;top:462px;background:#ffff00"></div>
<span class="m" style="left:192.8px;top:459px;transform:scaleX(0.841);">PI Failures</span>
<span class="m" style="left:180.7px;top:475px;transform:scaleX(0.876);">Durchschnitt</span>
<span class="m" style="left:287.7px;top:475px;transform:scaleX(0.904);color:#00007b;">0.03</span>
<span class="m" style="left:180.8px;top:490px;transform:scaleX(0.835);">Maximum:</span>
<span class="m" style="left:297.4px;top:490px;transform:scaleX(0.854);color:#00007b;">20</span>
<span class="m" style="left:180.8px;top:505px;transform:scaleX(0.844);">Gesamt:</span>
<span class="m" style="left:284.9px;top:505px;transform:scaleX(0.908);color:#00007b;">3738</span>
<div class="ge" style="left:331px;top:465px;width:146px;height:43px"></div>
<div class="cover" style="left:340px;top:460px;width:36px;background:#f5f4f0"></div>
<div class="sq" style="left:341px;top:462px;background:#ff00ff"></div>
<span class="m" style="left:351.8px;top:459px;transform:scaleX(0.827);">Jitter</span>
<span class="m" style="left:339.7px;top:475px;transform:scaleX(0.874);">Durchschnitt</span>
<span class="m" style="left:435.8px;top:475px;transform:scaleX(0.857);color:#00007b;">7.77 %</span>
<span class="m" style="left:339.8px;top:490px;transform:scaleX(0.831);">Maximum:</span>
<span class="m" style="left:440.7px;top:490px;transform:scaleX(0.865);color:#00007b;">8.9 %</span>
<span class="m" style="left:339.7px;top:509px;transform:scaleX(0.865);">PO Ausfälle:</span>
<span class="m" style="left:465.1px;top:509px;transform:scaleX(0.875);color:#00007b;">-</span>
</div>
</body></html>
